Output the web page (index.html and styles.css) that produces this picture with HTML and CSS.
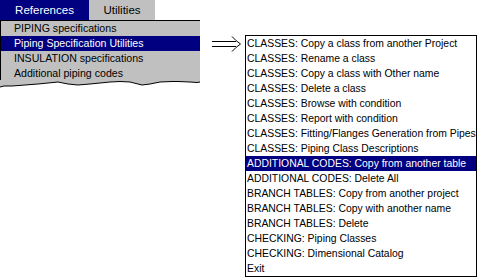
FILE: index.html
```html
<!DOCTYPE html>
<html lang="en">

<head>
    <meta charset="UTF-8" />
    <title>Piping Specification Utilities</title>
    <link rel="stylesheet" href="styles.css">
</head>

<body>
    <div class="page">
        <div class="left">
            <div class="menubar">
                <div class="tab tab-active">References</div>
                <div class="tab">Utilities</div>
            </div>
            <div class="dropdown">
                <div class="item">PIPING specifications</div>
                <div class="item item-selected">Piping Specification Utilities</div>
                <div class="item">INSULATION specifications</div>
                <div class="item">Additional piping codes</div>
            </div>
            <!-- torn bottom edge -->
            <svg class="torn" width="200" height="12" viewBox="0 0 200 12">
                <path d="M0 -1 V6 L4 5 L12 5 L25 4 L38 3 L48 2 L58 1 L68 3 L78 4 L90 3 L100 2 L110 1 L120 0.5 L130 1 L142 4 L150 3 L160 1 L172 0.5 L178 0.5 L190 1 L197 1.5 L200 1 V-1 Z" fill="#c0c0c0" />
                <polyline points="0,6 4,5 12,5 25,4 38,3 48,2 58,1 68,3 78,4 90,3 100,2 110,1 120,0.5 130,1 142,4 150,3 160,1 172,0.5 178,0.5 190,1 197,1.5 200,1" fill="none" stroke="#000" stroke-width="1" />
            </svg>
        </div>

        <svg class="arrow" width="30" height="18" viewBox="0 0 30 18">
            <line x1="0" y1="6.5" x2="24" y2="6.5" stroke="#000" />
            <line x1="0" y1="11.5" x2="24" y2="11.5" stroke="#000" />
            <path d="M20 1.5 Q24 6 28.5 9 Q24 12 20 16.5" fill="none" stroke="#000" />
        </svg>

        <ul class="submenu">
            <li>CLASSES: Copy a class from another Project</li>
            <li>CLASSES: Rename a class</li>
            <li>CLASSES: Copy a class with Other name</li>
            <li>CLASSES: Delete a class</li>
            <li>CLASSES: Browse with condition</li>
            <li>CLASSES: Report with condition</li>
            <li>CLASSES: Fitting/Flanges Generation from Pipes</li>
            <li>CLASSES: Piping Class Descriptions</li>
            <li class="selected">ADDITIONAL CODES: Copy from another table</li>
            <li>ADDITIONAL CODES: Delete All</li>
            <li>BRANCH TABLES: Copy from another project</li>
            <li>BRANCH TABLES: Copy with another name</li>
            <li>BRANCH TABLES: Delete</li>
            <li>CHECKING: Piping Classes</li>
            <li>CHECKING: Dimensional Catalog</li>
            <li>Exit</li>
        </ul>
    </div>
</body>

</html>
```

FILE: styles.css
```css
body {
    margin: 0;
    background: #fff;
    font-family: "Liberation Sans", Arial, sans-serif;
    font-size: 11px;
    color: #000;
}

.page {
    display: flex;
    align-items: flex-start;
    width: 478px;
    height: 278px;
    overflow: hidden;
}

.left {
    width: 200px;
    display: flex;
    flex-direction: column;
}

.menubar {
    display: flex;
    height: 20px;
}

.tab {
    height: 20px;
    line-height: 20px;
    text-align: center;
    background: #c0c0c0;
    font-size: 11.5px;
    width: 66px;
}

.tab-active {
    width: 89px;
    background: #000080;
    color: #fff;
}

.dropdown {
    background: #c0c0c0;
    border-top: 1px solid #000;
    border-left: 1px solid #000;
}

.item {
    height: 15px;
    line-height: 15px;
    padding-left: 13px;
    font-size: 10.6px;
    white-space: nowrap;
}

.item-selected {
    background: #000080;
    color: #fff;
}

.torn {
    display: block;
    overflow: visible;
}

.arrow {
    display: block;
    margin: 35px 0 0 12px;
}

.submenu {
    list-style: none;
    margin: 35px 0 0 3px;
    padding: 0;
    width: 230px;
    border: 1px solid #000;
}

.submenu li {
    height: 15px;
    line-height: 15px;
    padding-left: 1px;
    white-space: nowrap;
    font-size: 10.4px;
}

.submenu .selected {
    background: #000080;
    color: #fff;
}
```
